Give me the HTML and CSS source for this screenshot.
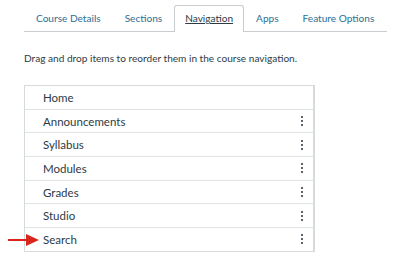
FILE: index.html
```html
<!DOCTYPE html>
<html lang="en">
<head>
    <meta charset="UTF-8">
    <meta name="viewport" content="width=device-width, initial-scale=1.0">
    <title>Course Settings - Navigation</title>
    <link rel="stylesheet" href="styles.css">
</head>
<body>
    <div class="page">
        <ul class="tabs">
            <li class="tab">Course Details</li>
            <li class="tab">Sections</li>
            <li class="tab active">Navigation</li>
            <li class="tab">Apps</li>
            <li class="tab">Feature Options</li>
        </ul>

        <p class="intro">Drag and drop items to reorder them in the course navigation.</p>

        <div class="nav-list">
            <div class="nav-item">
                <span class="nav-name">Home</span>
            </div>
            <div class="nav-item">
                <span class="nav-name">Announcements</span>
                <span class="kebab"><i></i><i></i><i></i></span>
            </div>
            <div class="nav-item">
                <span class="nav-name">Syllabus</span>
                <span class="kebab"><i></i><i></i><i></i></span>
            </div>
            <div class="nav-item">
                <span class="nav-name">Modules</span>
                <span class="kebab"><i></i><i></i><i></i></span>
            </div>
            <div class="nav-item">
                <span class="nav-name">Grades</span>
                <span class="kebab"><i></i><i></i><i></i></span>
            </div>
            <div class="nav-item">
                <span class="nav-name">Studio</span>
                <span class="kebab"><i></i><i></i><i></i></span>
            </div>
            <div class="nav-item highlight">
                <svg class="pointer" width="31" height="12" viewBox="0 0 31 12">
                    <rect x="0" y="5" width="20" height="2" fill="#d9261c"/>
                    <polygon points="18,0 31,6 18,12" fill="#d9261c"/>
                </svg>
                <span class="nav-name">Search</span>
                <span class="kebab"><i></i><i></i><i></i></span>
            </div>
        </div>
    </div>
</body>
</html>
```

FILE: styles.css
```css
body {
    margin: 0;
    font-family: Lato, "Open Sans", Arial, sans-serif;
    color: #2d3b45;
    background: #ffffff;
}
.page {
    padding: 5px 12px 0 24px;
}
.tabs {
    list-style: none;
    margin: 0;
    padding: 0;
    display: flex;
    border-bottom: 1px solid #c7cdd1;
}
.tab {
    flex-shrink: 0;
    white-space: nowrap;
    padding: 0 11px;
    height: 25px;
    line-height: 25px;
    font-size: 10.1px;
    color: #2b6f94;
    border: 1px solid transparent;
    border-bottom: none;
    margin-bottom: -1px;
}
.tab.active {
    color: #2d3b45;
    text-decoration: underline;
    background: #ffffff;
    border-color: #c7cdd1;
    border-radius: 3px 3px 0 0;
    height: 26px;
    padding: 0 10px;
}
.intro {
    margin: 19px 0 0;
    font-size: 10.1px;
    line-height: 14px;
}
.nav-list {
    margin-top: 20px;
    width: 288px;
    border: 1px solid #d5dadd;
    border-right-width: 2px;
}
.nav-item {
    position: relative;
    display: flex;
    align-items: center;
    justify-content: space-between;
    height: 22.7px;
    padding: 0 10px 0 18px;
    border-bottom: 1px solid #dfe3e6;
    font-size: 11.5px;
}
.nav-item:last-child {
    border-bottom: none;
}
.kebab {
    display: flex;
    flex-direction: column;
    gap: 2px;
}
.kebab i {
    display: block;
    width: 2px;
    height: 2px;
    background: #5a646c;
}
.pointer {
    position: absolute;
    left: -17px;
    top: 6px;
}
```
